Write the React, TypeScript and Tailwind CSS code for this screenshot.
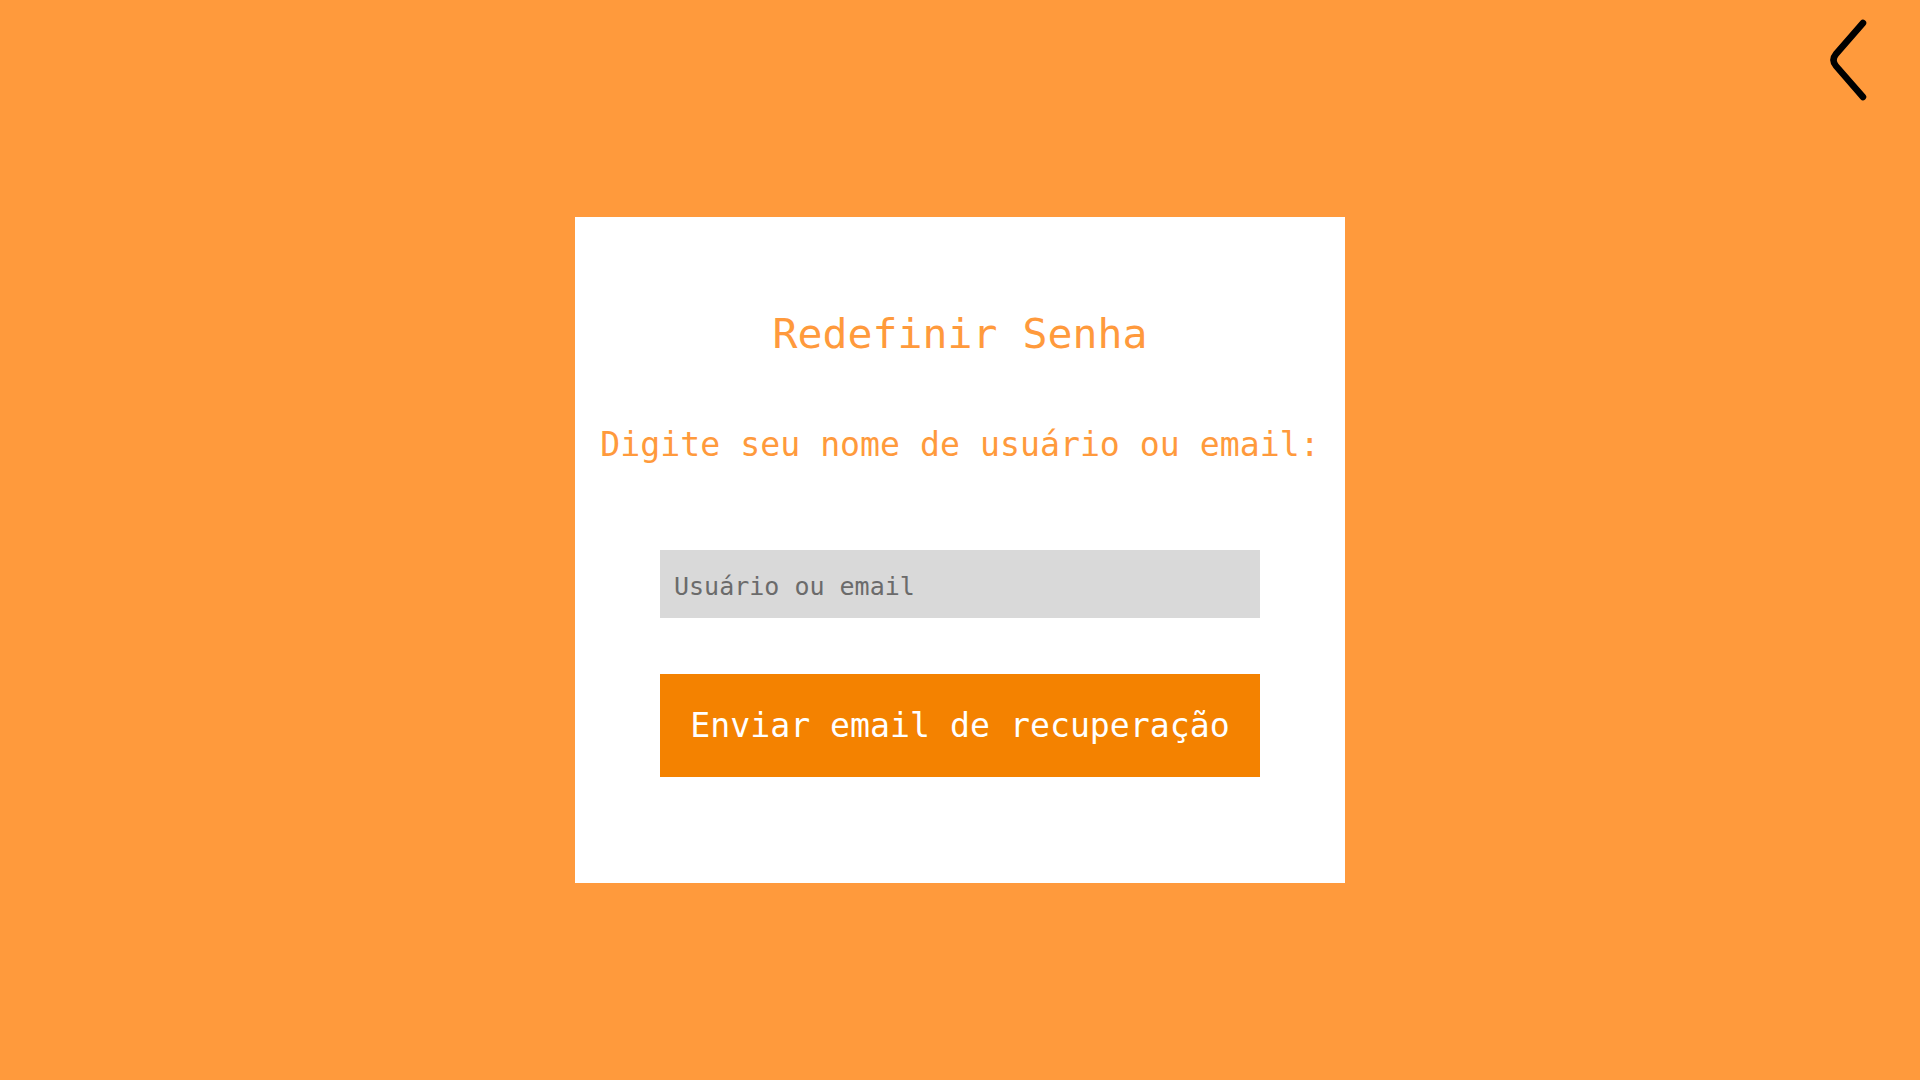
const mono = "font-['DejaVu_Sans_Mono','Liberation_Mono',monospace]";

function BackChevron() {
  return (
    <button className="absolute left-[1820px] top-[10px] w-[60px] h-[100px]" aria-label="Voltar">
      <svg width="60" height="100" viewBox="0 0 60 100" fill="none">
        <path
          d="M43 13 L16 44 Q11 50 16 56 L43 87"
          stroke="#000"
          strokeWidth="6.5"
          strokeLinecap="round"
          strokeLinejoin="round"
        />
      </svg>
    </button>
  );
}

export default function App() {
  return (
    <div className={`relative min-h-screen w-full bg-[#ff9a3c] flex flex-col items-center ${mono}`}>
      <BackChevron />

      <div className="mt-[217px] w-[770px] h-[666px] bg-white flex flex-col items-center pt-[93px]">
        <h1 className="text-[41.5px] leading-[48px] font-normal text-[#ff9a3c]">Redefinir Senha</h1>

        <p className="mt-[67px] text-[33.2px] leading-[40px] text-[#ff9a3c]">
          Digite seu nome de usuário ou email:
        </p>

        <input
          type="text"
          placeholder="Usuário ou email"
          className="mt-[85px] w-[600px] h-[68px] bg-[#d9d9d9] pl-[14px] pt-[4px] text-[25px] text-[#444] placeholder:text-[#6b6b6b] outline-none"
        />

        <button className="mt-[56px] w-[600px] h-[103px] bg-[#f48200] text-white text-[33.2px] leading-[40px]">
          Enviar email de recuperação
        </button>
      </div>
    </div>
  );
}
